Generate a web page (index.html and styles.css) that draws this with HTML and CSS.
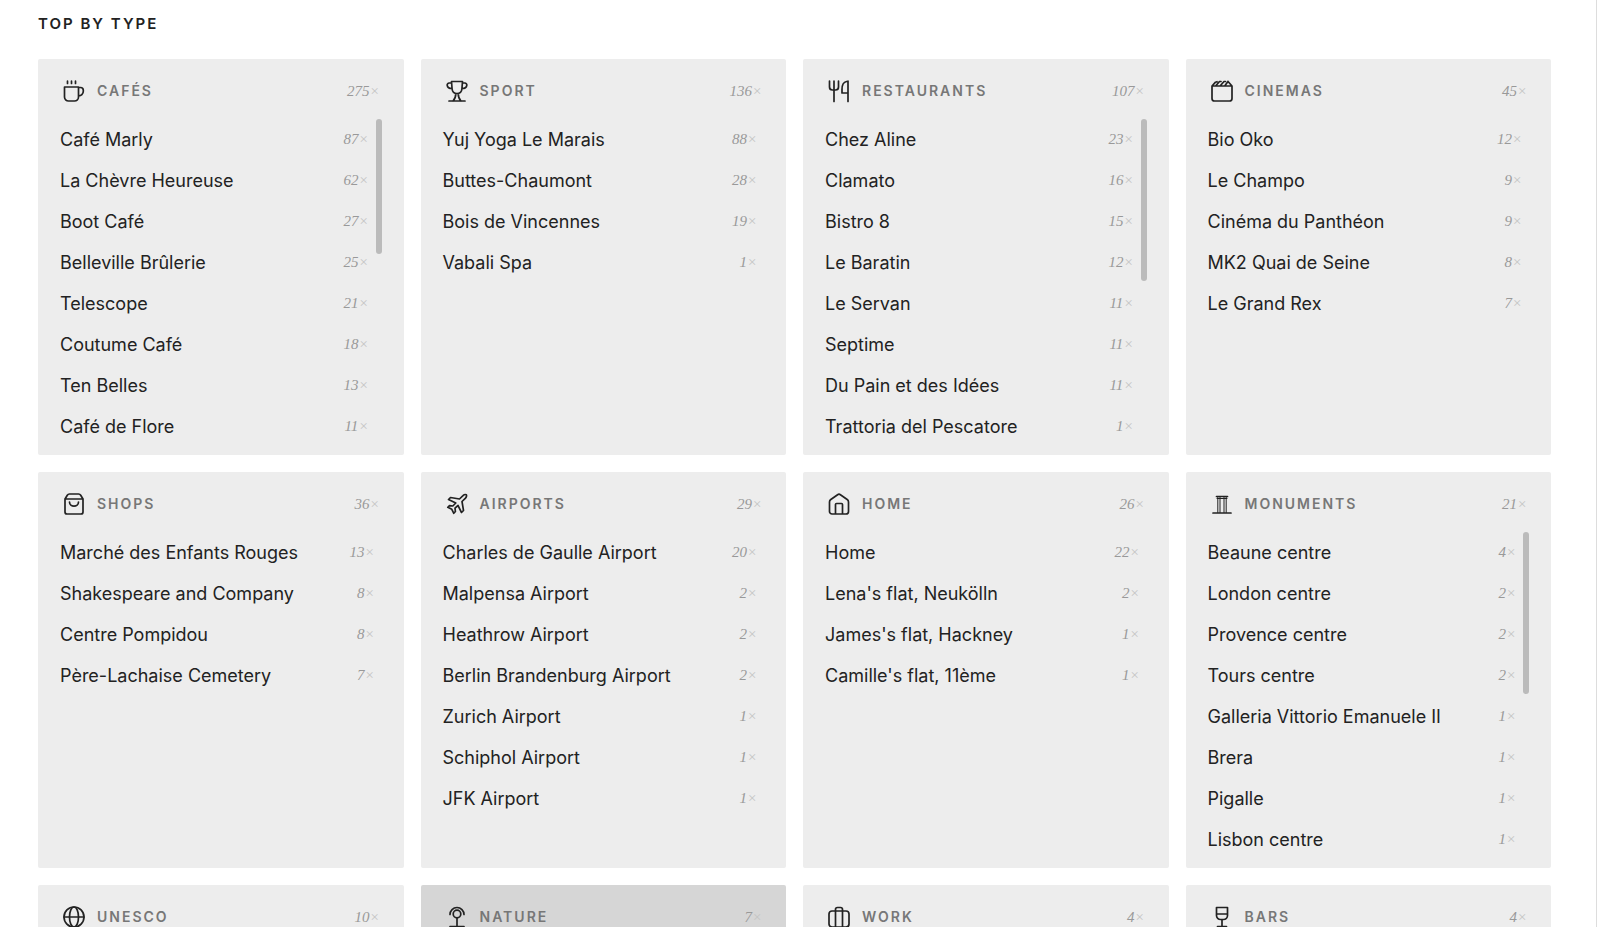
FILE: index.html
```html
<!DOCTYPE html>
<html lang="en">
<head>
    <meta charset="UTF-8">
    <meta name="viewport" content="width=device-width, initial-scale=1.0">
    <title>Top by type</title>
    <link rel="stylesheet" href="styles.css">
</head>
<body>

<main class="page">
    <h1>Top by type</h1>
    <div class="grid">

        <section class="card">
            <header>
                <svg class="icon" viewBox="0 0 24 24"><path d="M2.500 8h14v10a4 4 0 0 1-4 4h-6a4 4 0 0 1-4-4zM16.500 8.500h2a2.800 2.800 0 0 1 2.800 2.800v1a4.500 4.500 0 0 1-4.800 4.500M5.500 2.200v2.300M9.500 2.200v2.300M13.500 2.200v2.300"/></svg>
                <h2>Cafés</h2>
                <span class="count">275<i>×</i></span>
            </header>
            <ul class="scroll">
                <li>Café Marly <span class="count">87<i>×</i></span></li>
                <li>La Chèvre Heureuse <span class="count">62<i>×</i></span></li>
                <li>Boot Café <span class="count">27<i>×</i></span></li>
                <li>Belleville Brûlerie <span class="count">25<i>×</i></span></li>
                <li>Telescope <span class="count">21<i>×</i></span></li>
                <li>Coutume Café <span class="count">18<i>×</i></span></li>
                <li>Ten Belles <span class="count">13<i>×</i></span></li>
                <li>Café de Flore <span class="count">11<i>×</i></span></li>
            </ul>
            <div class="thumb" style="height: 34%"></div>
        </section>

        <section class="card">
            <header>
                <svg class="icon" viewBox="0 0 24 24"><path d="M6.500 2.500h11l-.6 7.500c-.3 3-2.500 4.500-4.900 4.500s-4.600-1.500-4.900-4.500zM6.500 4H4.200a2 2 0 0 0-2 2.300c.3 2.200 2 3.200 4.800 3.200M17.500 4h2.300a2 2 0 0 1 2 2.300c-.3 2.200-2 3.200-4.800 3.200M4 22h16M8 22c2-2 2.800-4 2.800-7.500M16 22c-2-2-2.800-4-2.800-7.500"/></svg>
                <h2>Sport</h2>
                <span class="count">136<i>×</i></span>
            </header>
            <ul>
                <li>Yuj Yoga Le Marais <span class="count">88<i>×</i></span></li>
                <li>Buttes-Chaumont <span class="count">28<i>×</i></span></li>
                <li>Bois de Vincennes <span class="count">19<i>×</i></span></li>
                <li>Vabali Spa <span class="count">1<i>×</i></span></li>
            </ul>
        </section>

        <section class="card">
            <header>
                <svg class="icon" viewBox="0 0 24 24"><path d="M2.500 2v6a3 3 0 0 0 3 3h3a3 3 0 0 0 3-3V2M7 2v20.500M21 2v20.500M21 2.500h-1.500c-3 .5-4.500 3.500-4.500 8V14h6"/></svg>
                <h2>Restaurants</h2>
                <span class="count">107<i>×</i></span>
            </header>
            <ul class="scroll">
                <li>Chez Aline <span class="count">23<i>×</i></span></li>
                <li>Clamato <span class="count">16<i>×</i></span></li>
                <li>Bistro 8 <span class="count">15<i>×</i></span></li>
                <li>Le Baratin <span class="count">12<i>×</i></span></li>
                <li>Le Servan <span class="count">11<i>×</i></span></li>
                <li>Septime <span class="count">11<i>×</i></span></li>
                <li>Du Pain et des Idées <span class="count">11<i>×</i></span></li>
                <li>Trattoria del Pescatore <span class="count">1<i>×</i></span></li>
            </ul>
            <div class="thumb" style="height: 41%"></div>
        </section>

        <section class="card">
            <header>
                <svg class="icon" viewBox="0 0 24 24"><path d="M2 7h20V19.500a2.500 2.500 0 0 1-2.500 2.500h-15A2.500 2.500 0 0 1 2 19.500zM2 7l3.500-3.800 1.500-.5M6 6.500l3.500-4h1.500M10.500 6.500l3.500-4h1.500M15 6.500 18 2.500M22 7l-4-4.500"/></svg>
                <h2>Cinemas</h2>
                <span class="count">45<i>×</i></span>
            </header>
            <ul>
                <li>Bio Oko <span class="count">12<i>×</i></span></li>
                <li>Le Champo <span class="count">9<i>×</i></span></li>
                <li>Cinéma du Panthéon <span class="count">9<i>×</i></span></li>
                <li>MK2 Quai de Seine <span class="count">8<i>×</i></span></li>
                <li>Le Grand Rex <span class="count">7<i>×</i></span></li>
            </ul>
        </section>

        <section class="card">
            <header>
                <svg class="icon" viewBox="0 0 24 24"><path d="M3 7v13a2 2 0 0 0 2 2h14a2 2 0 0 0 2-2V7zM3 7l2.300-3.800A2.500 2.500 0 0 1 7.500 2h9a2.500 2.500 0 0 1 2.200 1.200L21 7M7.500 10c0 5.500 9 5.500 9 0"/></svg>
                <h2>Shops</h2>
                <span class="count">36<i>×</i></span>
            </header>
            <ul>
                <li>Marché des Enfants Rouges <span class="count">13<i>×</i></span></li>
                <li>Shakespeare and Company <span class="count">8<i>×</i></span></li>
                <li>Centre Pompidou <span class="count">8<i>×</i></span></li>
                <li>Père-Lachaise Cemetery <span class="count">7<i>×</i></span></li>
            </ul>
        </section>

        <section class="card">
            <header>
                <svg class="icon" viewBox="0 0 24 24"><path d="M14.500 7l3.500-3.300c1-1 2.800-1.200 3.300-.9.500.5.200 2.300-.8 3.300L17 9.500l1.500 9-2 2-3.500-7-3 2.700.4 3.300-1.600 1.800-2-4-4-2 1.700-1.600 3.300.3 3-3-7.300-3.500 2-2z"/></svg>
                <h2>Airports</h2>
                <span class="count">29<i>×</i></span>
            </header>
            <ul>
                <li>Charles de Gaulle Airport <span class="count">20<i>×</i></span></li>
                <li>Malpensa Airport <span class="count">2<i>×</i></span></li>
                <li>Heathrow Airport <span class="count">2<i>×</i></span></li>
                <li>Berlin Brandenburg Airport <span class="count">2<i>×</i></span></li>
                <li>Zurich Airport <span class="count">1<i>×</i></span></li>
                <li>Schiphol Airport <span class="count">1<i>×</i></span></li>
                <li>JFK Airport <span class="count">1<i>×</i></span></li>
            </ul>
        </section>

        <section class="card">
            <header>
                <svg class="icon" viewBox="0 0 24 24"><path d="M2.500 10a3 3 0 0 1 1.300-2.500l6.800-4.800a2.500 2.500 0 0 1 2.800 0l6.800 4.800A3 3 0 0 1 21.500 10v9.500a2.500 2.500 0 0 1-2.500 2.500H5a2.500 2.500 0 0 1-2.500-2.500zM8.500 22v-9.500a1 1 0 0 1 1-1h5a1 1 0 0 1 1 1V22"/></svg>
                <h2>Home</h2>
                <span class="count">26<i>×</i></span>
            </header>
            <ul>
                <li>Home <span class="count">22<i>×</i></span></li>
                <li>Lena's flat, Neukölln <span class="count">2<i>×</i></span></li>
                <li>James's flat, Hackney <span class="count">1<i>×</i></span></li>
                <li>Camille's flat, 11ème <span class="count">1<i>×</i></span></li>
            </ul>
        </section>

        <section class="card">
            <header>
                <svg class="icon" viewBox="0 0 24 24"><path d="M6.500 4.500h11M3 21h18"/><path stroke-width="1" d="M7 6.500h10M7.800 5v15.500M10 5v15.500M14 5v15.500M16.200 5v15.500"/></svg>
                <h2>Monuments</h2>
                <span class="count">21<i>×</i></span>
            </header>
            <ul class="scroll">
                <li>Beaune centre <span class="count">4<i>×</i></span></li>
                <li>London centre <span class="count">2<i>×</i></span></li>
                <li>Provence centre <span class="count">2<i>×</i></span></li>
                <li>Tours centre <span class="count">2<i>×</i></span></li>
                <li>Galleria Vittorio Emanuele II <span class="count">1<i>×</i></span></li>
                <li>Brera <span class="count">1<i>×</i></span></li>
                <li>Pigalle <span class="count">1<i>×</i></span></li>
                <li>Lisbon centre <span class="count">1<i>×</i></span></li>
            </ul>
            <div class="thumb" style="height: 41%"></div>
        </section>

        <section class="card">
            <header>
                <svg class="icon" viewBox="0 0 24 24"><circle cx="12" cy="12" r="10"/><ellipse cx="12" cy="12" rx="4.500" ry="10"/><path d="M2 12h20"/></svg>
                <h2>Unesco</h2>
                <span class="count">10<i>×</i></span>
            </header>
        </section>

        <section class="card active">
            <header>
                <svg class="icon" viewBox="0 0 24 24"><circle cx="12" cy="9" r="3.800"/><path d="M5 9.500a7 7 0 1 1 14 0M12 13v8.500M5 21.500h14"/></svg>
                <h2>Nature</h2>
                <span class="count">7<i>×</i></span>
            </header>
        </section>

        <section class="card">
            <header>
                <svg class="icon" viewBox="0 0 24 24"><rect x="2" y="6" width="20" height="16" rx="3"/><path d="M8.500 22V4.500a2 2 0 0 1 2-2h3a2 2 0 0 1 2 2V22"/></svg>
                <h2>Work</h2>
                <span class="count">4<i>×</i></span>
            </header>
        </section>

        <section class="card">
            <header>
                <svg class="icon" viewBox="0 0 24 24"><path d="M6.500 2.500h11v8a4 4 0 0 1-4 4h-3a4 4 0 0 1-4-4zM6.500 9h11M12 14.500V21.500M7.500 21.500h9"/></svg>
                <h2>Bars</h2>
                <span class="count">4<i>×</i></span>
            </header>
        </section>

    </div>
</main>

</body>
</html>
```
FILE: styles.css
```css
body {
    margin: 0;
    background-color: #fff;
    color: #222;
    font-family: Inter, "Liberation Sans", sans-serif;
    font-size: 18px;
}
.page {
    margin-right: 3px;
    padding: 12px 45px 17px 38px;
    border-right: 1px solid #ddd;
}
h1 {
    margin: 0 0 23px;
    font-size: 15px;
    line-height: 24px;
    font-weight: 600;
    letter-spacing: 2px;
    text-transform: uppercase;
}
.grid {
    display: grid;
    grid-template-columns: repeat(4, minmax(0, 1fr));
    gap: 17px;
}
.card {
    position: relative;
    box-sizing: border-box;
    min-height: 396px;
    padding: 20px 22px 8px;
    background-color: #ededed;
    border-radius: 2px;
}
.card.active {
    background-color: #d6d6d6;
}
header {
    display: flex;
    align-items: center;
    height: 24px;
    margin-bottom: 16px;
    padding: 0 2px;
}
.icon {
    width: 24px;
    height: 24px;
    margin-right: 11px;
    fill: none;
    stroke: #222;
    stroke-width: 1.7;
    stroke-linecap: round;
    stroke-linejoin: round;
}
h2 {
    flex: 1;
    margin: 0;
    color: #777;
    font-size: 14px;
    line-height: 22px;
    font-weight: 600;
    letter-spacing: 2px;
    text-transform: uppercase;
}
.count {
    color: #999;
    font-family: "Liberation Serif", serif;
    font-size: 15px;
    font-style: italic;
}
.count i {
    color: #c4c4c4;
}
ul {
    margin: 0;
    padding: 0 7px 0 0;
    list-style: none;
}
ul.scroll {
    padding-right: 13px;
}
li {
    display: flex;
    justify-content: space-between;
    align-items: center;
    height: 41px;
    white-space: nowrap;
}
/* scroll position, drawn over the right edge of the list */
.thumb {
    position: absolute;
    top: 60px;
    right: 22px;
    width: 6px;
    border-radius: 3px;
    background-color: #bbb;
}
```
